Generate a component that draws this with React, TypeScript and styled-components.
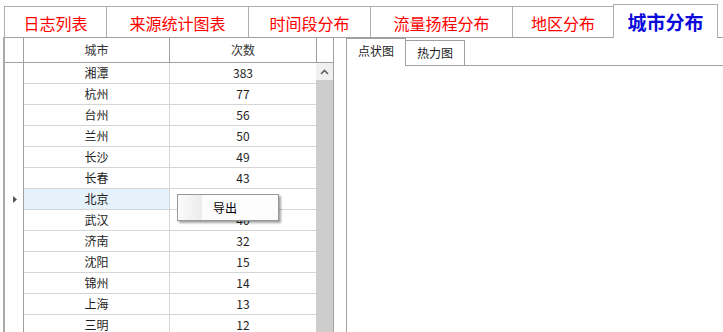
import React from "react";
import styled, { createGlobalStyle } from "styled-components";

const GlobalStyle = createGlobalStyle`
  html, body {
    margin: 0;
    padding: 0;
    background: #fff;
  }
  body {
    font-family: "Noto Sans CJK SC", "Noto Sans", sans-serif;
  }
`;

type CityRow = {
  city: string;
  count: number;
};

const tabs = [
  { name: "日志列表", width: 103 },
  { name: "来源统计图表", width: 143 },
  { name: "时间段分布", width: 123 },
  { name: "流量扬程分布", width: 143 },
  { name: "地区分布", width: 102 },
  { name: "城市分布", width: 105, active: true },
];

const rows: CityRow[] = [
  { city: "湘潭", count: 383 },
  { city: "杭州", count: 77 },
  { city: "台州", count: 56 },
  { city: "兰州", count: 50 },
  { city: "长沙", count: 49 },
  { city: "长春", count: 43 },
  { city: "北京", count: 42 },
  { city: "武汉", count: 40 },
  { city: "济南", count: 32 },
  { city: "沈阳", count: 15 },
  { city: "锦州", count: 14 },
  { city: "上海", count: 13 },
  { city: "三明", count: 12 },
];

const SELECTED = "北京";

const App: React.FC = () => {
  return (
    <Window>
      <GlobalStyle />
      <TabBar>
        {tabs.map((t) => (
          <Tab key={t.name} $w={t.width} $active={t.active}>
            {t.name}
          </Tab>
        ))}
      </TabBar>
      <Body>
        <Grid>
          <HeaderRow>
            <HeaderCell $w={19} />
            <HeaderCell $w={146}>城市</HeaderCell>
            <HeaderCell $w={147}>次数</HeaderCell>
            <HeaderCell $w={16} $last />
          </HeaderRow>
          <GridBody>
            <RowList>
              {rows.map((r) => {
                const selected = r.city === SELECTED;
                return (
                  <Row key={r.city}>
                    <RowHeader>
                      {selected && (
                        <svg width="4" height="7" viewBox="0 0 4 7">
                          <polygon points="0,0 4,3.5 0,7" fill="#555" />
                        </svg>
                      )}
                    </RowHeader>
                    <Cell $w={146} $line $selected={selected}>
                      {r.city}
                    </Cell>
                    <Cell $w={146}>{r.count}</Cell>
                  </Row>
                );
              })}
            </RowList>
            <ScrollBar>
              <ScrollButton>
                <svg width="9" height="6" viewBox="0 0 9 6">
                  <polyline
                    points="1,5 4.5,1.5 8,5"
                    fill="none"
                    stroke="#606060"
                    strokeWidth="1.6"
                  />
                </svg>
              </ScrollButton>
              <ScrollThumb />
            </ScrollBar>
          </GridBody>
        </Grid>
        <Splitter />
        <ChartPanel>
          <SubTabBar>
            <SubTab $active>点状图</SubTab>
            <SubTab>热力图</SubTab>
          </SubTabBar>
        </ChartPanel>
      </Body>
      <ContextMenu>
        <MenuGutter />
        <MenuLabel>导出</MenuLabel>
      </ContextMenu>
    </Window>
  );
};

export default App;

const Window = styled.div`
  position: relative;
  width: 723px;
  height: 332px;
  overflow: hidden;
  background: #fff;
`;

const TabBar = styled.div`
  display: flex;
  align-items: flex-end;
  height: 37px;
  padding-left: 4px;
  box-sizing: border-box;
`;

const Tab = styled.div<{ $w: number; $active?: boolean }>`
  position: relative;
  z-index: ${(p) => (p.$active ? 2 : 1)};
  box-sizing: border-box;
  width: ${(p) => p.$w}px;
  height: ${(p) => (p.$active ? 34 : 31)}px;
  margin-left: -1px;
  margin-bottom: ${(p) => (p.$active ? -1 : 0)}px;
  border: 1px solid #adadad;
  border-bottom: none;
  background: #fff;
  display: flex;
  align-items: center;
  justify-content: center;
  padding-top: ${(p) => (p.$active ? 0 : 1)}px;
  color: ${(p) => (p.$active ? "#0a0adc" : "#ff0000")};
  font-size: ${(p) => (p.$active ? 19 : 16)}px;
  font-weight: ${(p) => (p.$active ? 700 : 400)};
  line-height: 1;
  white-space: nowrap;

  &:first-child {
    margin-left: 0;
  }
`;

const Body = styled.div`
  display: flex;
  margin-left: 3px;
  height: 295px;
  border-top: 1px solid #a0a0a0;
  border-left: 2px solid #a9a9a9;
  box-sizing: border-box;
`;

const Grid = styled.div`
  display: flex;
  flex-direction: column;
  width: 329px;
  border-right: 1px solid #a0a0a0;
  box-sizing: border-box;
  font-size: 12px;
  color: #1e1e1e;
  line-height: 1;
`;

const HeaderRow = styled.div`
  display: flex;
  height: 25px;
  border-bottom: 1px solid #a0a0a0;
  box-sizing: border-box;
  flex-shrink: 0;
`;

const HeaderCell = styled.div<{ $w: number; $last?: boolean }>`
  width: ${(p) => p.$w}px;
  box-sizing: border-box;
  border-right: ${(p) => (p.$last ? "none" : "1px solid #a0a0a0")};
  display: flex;
  align-items: center;
  justify-content: center;
  color: #333;
`;

const GridBody = styled.div`
  display: flex;
  flex: 1;
  min-height: 0;
`;

const RowList = styled.div`
  display: flex;
  flex-direction: column;
  width: 311px;
`;

const Row = styled.div`
  display: flex;
  height: 21px;
  flex-shrink: 0;
`;

const RowHeader = styled.div`
  width: 19px;
  box-sizing: border-box;
  border-right: 1px solid #a0a0a0;
  display: flex;
  align-items: center;
  justify-content: center;
  padding-left: 2px;
`;

const Cell = styled.div<{ $w: number; $line?: boolean; $selected?: boolean }>`
  width: ${(p) => p.$w}px;
  box-sizing: border-box;
  border-bottom: 1px solid #d5d5d5;
  border-right: ${(p) => (p.$line ? "1px solid #d5d5d5" : "none")};
  background: ${(p) => (p.$selected ? "#e5f1fb" : "#fff")};
  display: flex;
  align-items: center;
  justify-content: center;
`;

const ScrollBar = styled.div`
  display: flex;
  flex-direction: column;
  width: 17px;
`;

const ScrollButton = styled.div`
  height: 17px;
  background: #f0f0f0;
  display: flex;
  align-items: center;
  justify-content: center;
`;

const ScrollThumb = styled.div`
  flex: 1;
  background: #cdcdcd;
`;

const Splitter = styled.div`
  width: 12px;
  background: #fff;
`;

const ChartPanel = styled.div`
  flex: 1;
  border-left: 1px solid #a0a0a0;
`;

const SubTabBar = styled.div`
  display: flex;
  align-items: flex-end;
  height: 28px;
  box-sizing: border-box;
  border-bottom: 1px solid #a0a0a0;
`;

const SubTab = styled.div<{ $active?: boolean }>`
  position: relative;
  z-index: ${(p) => (p.$active ? 2 : 1)};
  box-sizing: border-box;
  width: 60px;
  height: ${(p) => (p.$active ? 28 : 25)}px;
  margin-left: -1px;
  margin-bottom: ${(p) => (p.$active ? -1 : 0)}px;
  border: 1px solid #a0a0a0;
  border-bottom: none;
  background: #fff;
  display: flex;
  align-items: center;
  justify-content: center;
  padding-bottom: ${(p) => (p.$active ? 3 : 0)}px;
  font-size: 12px;
  line-height: 1;
  color: #1e1e1e;
`;

const ContextMenu = styled.div`
  position: absolute;
  left: 177px;
  top: 194px;
  width: 102px;
  height: 27px;
  box-sizing: border-box;
  border: 1px solid #979797;
  background: #fcfcfc;
  box-shadow: 2px 2px 2px rgba(0, 0, 0, 0.35);
  display: flex;
  align-items: stretch;
  z-index: 10;
`;

const MenuGutter = styled.div`
  width: 24px;
  background: linear-gradient(to right, #fbfbfb, #ececec);
`;

const MenuLabel = styled.div`
  display: flex;
  align-items: center;
  padding-left: 11px;
  font-size: 12px;
  line-height: 1;
  color: #000;
`;
